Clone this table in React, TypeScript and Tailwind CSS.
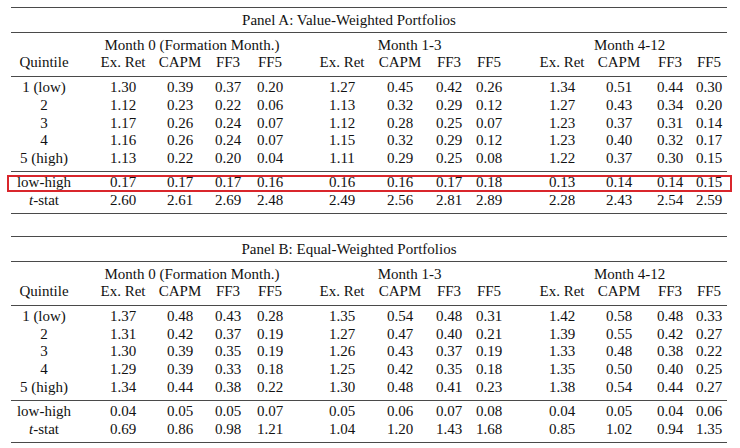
import React from "react";

type Row = { label: React.ReactNode; values: string[] };

type Panel = {
  title: string;
  body: Row[];
  bottom: Row[];
};

// each cell has its own width + left gap so column centres line up with the source table
const cols = [
  "ml-[3px] w-[60px]",
  "ml-[24px] w-[50px]",
  "ml-[9px] w-[46px]",
  "ml-[8px] w-[34px]",
  "ml-[9px] w-[32px]",
  "ml-[31px] w-[50px]",
  "ml-[10px] w-[46px]",
  "ml-[9px] w-[34px]",
  "ml-[7px] w-[32px]",
  "ml-[32px] w-[50px]",
  "ml-[9px] w-[46px]",
  "ml-[11px] w-[34px]",
  "ml-[6px] w-[32px]",
];

const headers = ["Quintile", "Ex. Ret", "CAPM", "FF3", "FF5", "Ex. Ret", "CAPM", "FF3", "FF5", "Ex. Ret", "CAPM", "FF3", "FF5"];

const tStat = (
  <>
    <span className="italic">t</span>-stat
  </>
);

const panels: Panel[] = [
  {
    title: "Panel A: Value-Weighted Portfolios",
    body: [
      { label: "1 (low)", values: ["1.30", "0.39", "0.37", "0.20", "1.27", "0.45", "0.42", "0.26", "1.34", "0.51", "0.44", "0.30"] },
      { label: "2", values: ["1.12", "0.23", "0.22", "0.06", "1.13", "0.32", "0.29", "0.12", "1.27", "0.43", "0.34", "0.20"] },
      { label: "3", values: ["1.17", "0.26", "0.24", "0.07", "1.12", "0.28", "0.25", "0.07", "1.23", "0.37", "0.31", "0.14"] },
      { label: "4", values: ["1.16", "0.26", "0.24", "0.07", "1.15", "0.32", "0.29", "0.12", "1.23", "0.40", "0.32", "0.17"] },
      { label: "5 (high)", values: ["1.13", "0.22", "0.20", "0.04", "1.11", "0.29", "0.25", "0.08", "1.22", "0.37", "0.30", "0.15"] },
    ],
    bottom: [
      { label: "low-high", values: ["0.17", "0.17", "0.17", "0.16", "0.16", "0.16", "0.17", "0.18", "0.13", "0.14", "0.14", "0.15"] },
      { label: tStat, values: ["2.60", "2.61", "2.69", "2.48", "2.49", "2.56", "2.81", "2.89", "2.28", "2.43", "2.54", "2.59"] },
    ],
  },
  {
    title: "Panel B: Equal-Weighted Portfolios",
    body: [
      { label: "1 (low)", values: ["1.37", "0.48", "0.43", "0.28", "1.35", "0.54", "0.48", "0.31", "1.42", "0.58", "0.48", "0.33"] },
      { label: "2", values: ["1.31", "0.42", "0.37", "0.19", "1.27", "0.47", "0.40", "0.21", "1.39", "0.55", "0.42", "0.27"] },
      { label: "3", values: ["1.30", "0.39", "0.35", "0.19", "1.26", "0.43", "0.37", "0.19", "1.33", "0.48", "0.38", "0.22"] },
      { label: "4", values: ["1.29", "0.39", "0.33", "0.18", "1.25", "0.42", "0.35", "0.18", "1.35", "0.50", "0.40", "0.25"] },
      { label: "5 (high)", values: ["1.34", "0.44", "0.38", "0.22", "1.30", "0.48", "0.41", "0.23", "1.38", "0.54", "0.44", "0.27"] },
    ],
    bottom: [
      { label: "low-high", values: ["0.04", "0.05", "0.05", "0.07", "0.05", "0.06", "0.07", "0.08", "0.04", "0.05", "0.04", "0.06"] },
      { label: tStat, values: ["0.69", "0.86", "0.98", "1.21", "1.04", "1.20", "1.43", "1.68", "0.85", "1.02", "0.94", "1.35"] },
    ],
  },
];

function Rule() {
  return <div className="h-px bg-[#4a4a4a]" />;
}

function Cells({ cells }: { cells: React.ReactNode[] }) {
  return (
    <>
      {cells.map((c, i) => (
        <div key={i} className={`${cols[i]} shrink-0 flex justify-center whitespace-nowrap`}>
          {c}
        </div>
      ))}
    </>
  );
}

function DataRow({ row, boxed }: { row: Row; boxed?: boolean }) {
  return (
    <div className="relative flex">
      <Cells cells={[row.label, ...row.values]} />
      {boxed && <div className="absolute -left-[4px] -right-[5px] top-[2px] -bottom-[1px] border-2 border-[#d9262c]" />}
    </div>
  );
}

function PanelTable({ panel, highlight }: { panel: Panel; highlight?: boolean }) {
  return (
    <div>
      <Rule />
      <div className="h-[24px] leading-[24px] flex justify-center pr-[40px]">{panel.title}</div>
      <Rule />
      <div className="pt-[4px] pb-[5px] leading-[17px]">
        <div className="flex">
          <div className="w-[87px] shrink-0" />
          <div className="w-[188px] shrink-0 flex justify-center whitespace-nowrap">Month 0 (Formation Month.)</div>
          <div className="ml-[31px] w-[185px] shrink-0 flex justify-center">Month 1-3</div>
          <div className="ml-[35px] w-[185px] shrink-0 flex justify-center">Month 4-12</div>
        </div>
        <div className="flex">
          <Cells cells={headers} />
        </div>
      </div>
      <Rule />
      <div className="pt-[2px] pb-[3px] leading-[17.75px]">
        {panel.body.map((r, i) => (
          <DataRow key={i} row={r} />
        ))}
      </div>
      <Rule />
      <div className="pt-[1px] pb-[4px] leading-[18px]">
        {panel.bottom.map((r, i) => (
          <DataRow key={i} row={r} boxed={highlight && i === 0} />
        ))}
      </div>
      <Rule />
    </div>
  );
}

export default function App() {
  return (
    <div className="min-h-[448px] w-[740px] bg-white pt-[7px] pl-[11px] text-[15px] text-[#111] font-['Liberation_Serif',serif]">
      <div className="w-[716px] flex flex-col gap-[22px]">
        <PanelTable panel={panels[0]} highlight />
        <PanelTable panel={panels[1]} />
      </div>
    </div>
  );
}
